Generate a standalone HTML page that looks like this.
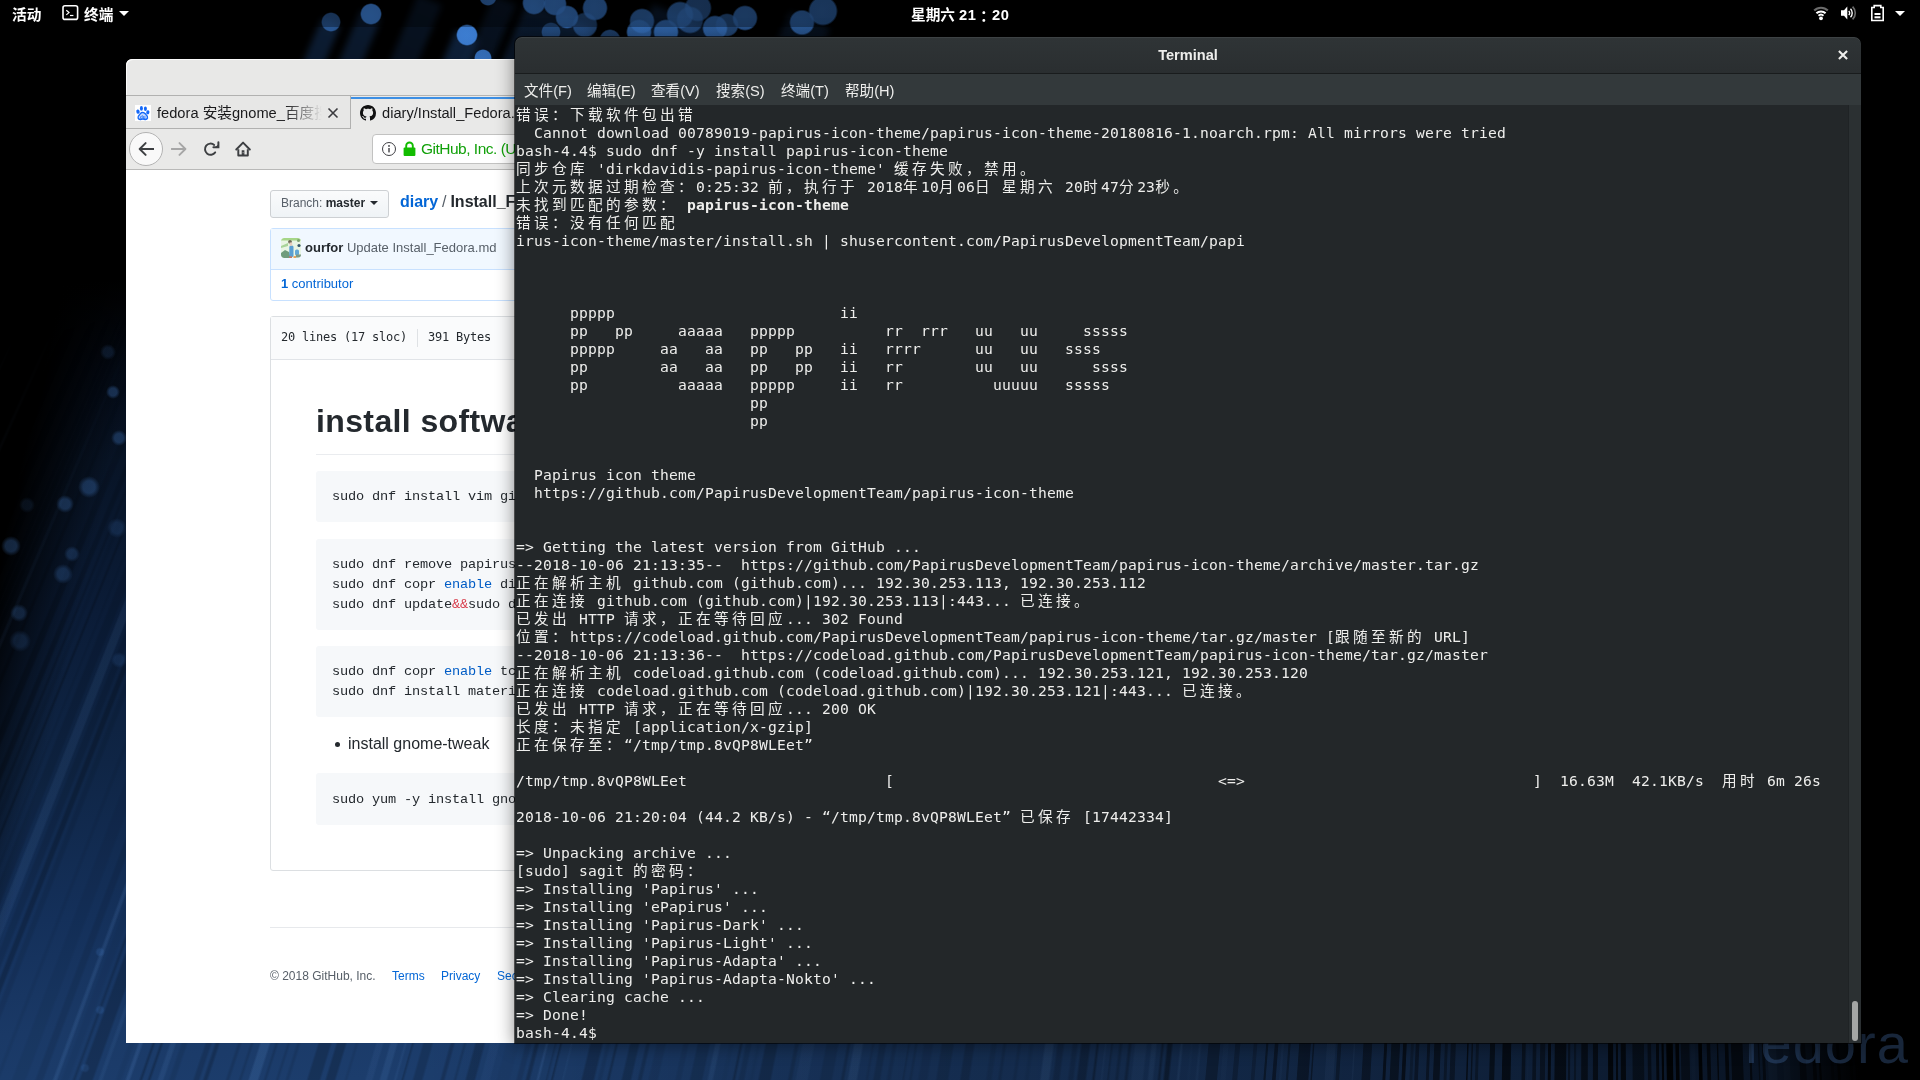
<!DOCTYPE html>
<html lang="zh-CN">
<head>
<meta charset="utf-8">
<title>Desktop</title>
<style>
*{box-sizing:border-box;margin:0;padding:0}
html,body{width:1920px;height:1080px;overflow:hidden;background:#000}
body{position:relative;font-family:"Liberation Sans","Noto Sans CJK SC",sans-serif}
.abs{position:absolute}
/* wallpaper */
#wall{position:absolute;left:0;top:0;width:1920px;height:1080px;overflow:hidden;background:#000}
#wall .fade{position:absolute;left:0;top:0;width:1920px;height:1080px;background:linear-gradient(to right,rgba(0,0,0,0) 845px,#000 885px) 0 0/1920px 70px no-repeat,linear-gradient(to right,rgba(0,0,0,0) 0,rgba(0,0,0,0) 420px,rgba(0,0,0,.22) 800px,rgba(0,0,0,.36) 1200px,rgba(0,0,0,.5) 1550px,rgba(0,0,0,.68) 1760px,#000 1862px)}
#wall .blue{position:absolute;left:0;top:0;width:1920px;height:1080px;
 background:linear-gradient(103deg,#000 0,#000 125px,rgba(0,0,0,0) 215px),
 linear-gradient(174deg,#000 0,#000 290px,#040b17 380px,#081426 470px,#0b1c37 620px,#0f2545 770px,#14305a 920px,#1a3966 1030px,#1c3d6c 1110px,#1d3e6f 100%)}
.bk{position:absolute;border-radius:50%}
#fedoralogo{position:absolute;left:1744px;top:1011px;font:italic 56px "Liberation Sans",sans-serif;color:rgba(66,104,160,.36);letter-spacing:1px;font-style:normal}
/* top bar */
#panel{position:absolute;left:0;top:0;width:1920px;height:27px;background:rgba(0,0,0,.32)}
#topbar{will-change:transform;position:absolute;left:0;top:0;width:1920px;height:27px;color:#fff;font:bold 14.67px "Liberation Sans","Noto Sans CJK SC",sans-serif}
#topbar span{position:absolute;top:2px;line-height:27px;white-space:nowrap}
/* firefox */
#ff{will-change:transform;position:absolute;left:126px;top:59px;width:1000px;height:984px;background:#fff;border-radius:6px 6px 0 0;overflow:hidden}
#ff .title{position:absolute;left:0;top:0;width:100%;height:37px;background:#e8e8e7;border-radius:6px 6px 0 0;box-shadow:inset 1px 1px 0 #fbfbfb}
#ff .tabs{position:absolute;left:0;top:36px;width:100%;height:34px;background:#e8e8e7;border-top:1px solid #b4b4b3;border-bottom:1px solid #a9a9a8}
#ff .nav{position:absolute;left:0;top:70px;width:100%;height:41px;background:#e9e9e8;border-bottom:1px solid #b9b9b8}
.pg{position:absolute;left:-126px;top:-59px;width:1920px;height:1080px}
.tabt{font:14.67px/24px "Liberation Sans","Noto Sans CJK SC",sans-serif;color:#1a1a1c;white-space:nowrap;overflow:hidden}
.cb{left:316px;width:700px;background:#f6f8fa;border-radius:3px}
.cd{left:332px;letter-spacing:-.16px;font:13.6px/20px "Liberation Mono",monospace;color:#24292e;white-space:pre}
.cd .k{color:#005cc5}.cd .o{color:#d73a49}
/* terminal */
#term{position:absolute;left:515px;top:37px;width:1346px;height:1006px;background:#232729;border-radius:7px 7px 0 0;box-shadow:0 0 0 1px rgba(0,0,0,.6),0 2px 18px 1px rgba(0,0,0,.45);overflow:hidden}
#term .hb{position:absolute;left:0;top:0;width:100%;height:37px;background:linear-gradient(#2f3436,#2a2e30);border-bottom:1px solid #191c1d;border-radius:7px 7px 0 0;box-shadow:inset 0 1px rgba(255,255,255,.07)}
#term .hb .t{position:absolute;left:0;width:100%;top:0;text-align:center;color:#eeeeec;font:bold 14.6px/37px "Liberation Sans",sans-serif}
#term .menu{position:absolute;left:0;top:37px;width:100%;height:31px;background:#33393b;color:#eeeeec;font:14.6px/31px "Liberation Sans","Noto Sans CJK SC",sans-serif}
#term .menu span{position:absolute;top:1.5px;white-space:nowrap}
#term .sb{position:absolute;right:0;top:68px;width:13px;height:938px;background:#2b3032;border-left:1px solid #1f2325}
#term .sb i{position:absolute;left:3px;top:896px;width:6px;height:40px;border-radius:3px;background:#a4a6a5}
#scr{position:absolute;left:1px;top:69px;width:1332px;height:938px;color:#eeeeec;font:14.67px/18px "DejaVu Sans Mono","Noto Sans CJK SC",monospace;letter-spacing:0.176px;overflow:hidden;will-change:transform}
#scr div{height:18px;white-space:pre}
#scr i{line-height:0;font-style:normal;font-family:"Noto Sans CJK SC",sans-serif;letter-spacing:3.345px}
#scr b{font-weight:bold}
</style>
</head>
<body>
<div id="wall"><div class="blue"></div>
<div class="abs" style="left:0;top:0;width:1920px;height:1080px;-webkit-mask-image:linear-gradient(165deg,rgba(0,0,0,0) 330px,#000 640px);mask-image:linear-gradient(165deg,rgba(0,0,0,0) 330px,#000 640px);background:conic-gradient(from 170deg at 1600px -3100px,rgba(0,0,0,0) 0.000deg,rgba(110,165,235,0.08) 0.012deg,rgba(110,165,235,0.08) 0.090deg,rgba(0,0,0,0) 0.102deg,rgba(0,0,0,0) 0.114deg,rgba(110,165,235,0.05) 0.126deg,rgba(110,165,235,0.05) 0.144deg,rgba(0,0,0,0) 0.156deg,rgba(0,0,0,0) 0.234deg,rgba(110,165,235,0.06) 0.246deg,rgba(110,165,235,0.06) 0.254deg,rgba(0,0,0,0) 0.266deg,rgba(0,0,0,0) 0.278deg,rgba(0,0,0,0.60) 0.290deg,rgba(0,0,0,0.60) 0.398deg,rgba(0,0,0,0) 0.410deg,rgba(0,0,0,0) 0.422deg,rgba(110,165,235,0.11) 0.434deg,rgba(110,165,235,0.11) 0.452deg,rgba(0,0,0,0) 0.464deg,rgba(0,0,0,0) 0.542deg,rgba(0,0,0,0.80) 0.554deg,rgba(0,0,0,0.80) 0.562deg,rgba(0,0,0,0) 0.574deg,rgba(0,0,0,0) 0.586deg,rgba(0,0,0,0.40) 0.598deg,rgba(0,0,0,0.40) 0.626deg,rgba(0,0,0,0) 0.638deg,rgba(0,0,0,0) 0.674deg,rgba(0,0,0,0.51) 0.686deg,rgba(0,0,0,0.51) 0.714deg,rgba(0,0,0,0) 0.726deg,rgba(0,0,0,0) 0.738deg,rgba(0,0,0,0.65) 0.750deg,rgba(0,0,0,0.65) 0.768deg,rgba(0,0,0,0) 0.780deg,rgba(0,0,0,0) 0.858deg,rgba(0,0,0,0.79) 0.870deg,rgba(0,0,0,0.79) 0.978deg,rgba(0,0,0,0) 0.990deg,rgba(0,0,0,0) 1.026deg,rgba(0,0,0,0.68) 1.038deg,rgba(0,0,0,0.68) 1.096deg,rgba(0,0,0,0) 1.108deg,rgba(0,0,0,0) 1.120deg,rgba(0,0,0,0.79) 1.132deg,rgba(0,0,0,0.79) 1.190deg,rgba(0,0,0,0) 1.202deg,rgba(0,0,0,0) 1.238deg,rgba(0,0,0,0.71) 1.250deg,rgba(0,0,0,0.71) 1.268deg,rgba(0,0,0,0) 1.280deg,rgba(0,0,0,0) 1.304deg,rgba(0,0,0,0.54) 1.316deg,rgba(0,0,0,0.54) 1.464deg,rgba(0,0,0,0) 1.476deg,rgba(0,0,0,0) 1.554deg,rgba(0,0,0,0.60) 1.566deg,rgba(0,0,0,0.60) 1.644deg,rgba(0,0,0,0) 1.656deg,rgba(0,0,0,0) 1.710deg,rgba(110,165,235,0.14) 1.722deg,rgba(110,165,235,0.14) 1.740deg,rgba(0,0,0,0) 1.752deg,rgba(0,0,0,0) 1.806deg,rgba(0,0,0,0.72) 1.818deg,rgba(0,0,0,0.72) 1.836deg,rgba(0,0,0,0) 1.848deg,rgba(0,0,0,0) 1.968deg,rgba(0,0,0,0.67) 1.980deg,rgba(0,0,0,0.67) 2.128deg,rgba(0,0,0,0) 2.140deg,rgba(0,0,0,0) 2.152deg,rgba(0,0,0,0.64) 2.164deg,rgba(0,0,0,0.64) 2.312deg,rgba(0,0,0,0) 2.324deg,rgba(0,0,0,0) 2.348deg,rgba(0,0,0,0.53) 2.360deg,rgba(0,0,0,0.53) 2.418deg,rgba(0,0,0,0) 2.430deg,rgba(0,0,0,0) 2.484deg,rgba(0,0,0,0.52) 2.496deg,rgba(0,0,0,0.52) 2.514deg,rgba(0,0,0,0) 2.526deg,rgba(0,0,0,0) 2.550deg,rgba(110,165,235,0.07) 2.562deg,rgba(110,165,235,0.07) 2.670deg,rgba(0,0,0,0) 2.682deg,rgba(0,0,0,0) 2.736deg,rgba(0,0,0,0.49) 2.748deg,rgba(0,0,0,0.49) 2.826deg,rgba(0,0,0,0) 2.838deg,rgba(0,0,0,0) 2.850deg,rgba(0,0,0,0.46) 2.862deg,rgba(0,0,0,0.46) 2.890deg,rgba(0,0,0,0) 2.902deg,rgba(0,0,0,0) 2.980deg,rgba(0,0,0,0.50) 2.992deg,rgba(0,0,0,0.50) 3.020deg,rgba(0,0,0,0) 3.032deg,rgba(0,0,0,0) 3.068deg,rgba(110,165,235,0.12) 3.080deg,rgba(110,165,235,0.12) 3.158deg,rgba(0,0,0,0) 3.170deg,rgba(0,0,0,0) 3.248deg,rgba(0,0,0,0.88) 3.260deg,rgba(0,0,0,0.88) 3.268deg,rgba(0,0,0,0) 3.280deg,rgba(0,0,0,0) 3.400deg,rgba(0,0,0,0.60) 3.412deg,rgba(0,0,0,0.60) 3.520deg,rgba(0,0,0,0) 3.532deg,rgba(0,0,0,0) 3.586deg,rgba(0,0,0,0.69) 3.598deg,rgba(0,0,0,0.69) 3.606deg,rgba(0,0,0,0) 3.618deg,rgba(0,0,0,0) 3.630deg,rgba(0,0,0,0.58) 3.642deg,rgba(0,0,0,0.58) 3.720deg,rgba(0,0,0,0) 3.732deg,rgba(0,0,0,0) 3.810deg,rgba(110,165,235,0.11) 3.822deg,rgba(110,165,235,0.11) 3.840deg,rgba(0,0,0,0) 3.852deg,rgba(0,0,0,0) 3.864deg,rgba(0,0,0,0.46) 3.876deg,rgba(0,0,0,0.46) 3.914deg,rgba(0,0,0,0) 3.926deg,rgba(0,0,0,0) 3.962deg,rgba(0,0,0,0.55) 3.974deg,rgba(0,0,0,0.55) 4.052deg,rgba(0,0,0,0) 4.064deg,rgba(0,0,0,0) 4.118deg,rgba(0,0,0,0.39) 4.130deg,rgba(0,0,0,0.39) 4.278deg,rgba(0,0,0,0) 4.290deg,rgba(0,0,0,0) 4.326deg,rgba(0,0,0,0.67) 4.338deg,rgba(0,0,0,0.67) 4.396deg,rgba(0,0,0,0) 4.408deg,rgba(0,0,0,0) 4.432deg,rgba(0,0,0,0.44) 4.444deg,rgba(0,0,0,0.44) 4.522deg,rgba(0,0,0,0) 4.534deg,rgba(0,0,0,0) 4.612deg,rgba(110,165,235,0.13) 4.624deg,rgba(110,165,235,0.13) 4.682deg,rgba(0,0,0,0) 4.694deg,rgba(0,0,0,0) 4.814deg,rgba(0,0,0,0.64) 4.826deg,rgba(0,0,0,0.64) 4.884deg,rgba(0,0,0,0) 4.896deg,rgba(0,0,0,0) 4.920deg,rgba(0,0,0,0.76) 4.932deg,rgba(0,0,0,0.76) 5.010deg,rgba(0,0,0,0) 5.022deg,rgba(0,0,0,0) 5.046deg,rgba(110,165,235,0.12) 5.058deg,rgba(110,165,235,0.12) 5.096deg,rgba(0,0,0,0) 5.108deg,rgba(0,0,0,0) 5.132deg,rgba(0,0,0,0.41) 5.144deg,rgba(0,0,0,0.41) 5.182deg,rgba(0,0,0,0) 5.194deg,rgba(0,0,0,0) 5.206deg,rgba(0,0,0,0.61) 5.218deg,rgba(0,0,0,0.61) 5.276deg,rgba(0,0,0,0) 5.288deg,rgba(0,0,0,0) 5.324deg,rgba(110,165,235,0.12) 5.336deg,rgba(110,165,235,0.12) 5.484deg,rgba(0,0,0,0) 5.496deg,rgba(0,0,0,0) 5.532deg,rgba(0,0,0,0.54) 5.544deg,rgba(0,0,0,0.54) 5.622deg,rgba(0,0,0,0) 5.634deg,rgba(0,0,0,0) 5.670deg,rgba(0,0,0,0.76) 5.682deg,rgba(0,0,0,0.76) 5.720deg,rgba(0,0,0,0) 5.732deg,rgba(0,0,0,0) 5.744deg,rgba(110,165,235,0.08) 5.756deg,rgba(110,165,235,0.08) 5.904deg,rgba(0,0,0,0) 5.916deg,rgba(0,0,0,0) 6.036deg,rgba(110,165,235,0.05) 6.048deg,rgba(110,165,235,0.05) 6.066deg,rgba(0,0,0,0) 6.078deg,rgba(0,0,0,0) 6.132deg,rgba(0,0,0,0.68) 6.144deg,rgba(0,0,0,0.68) 6.182deg,rgba(0,0,0,0) 6.194deg,rgba(0,0,0,0) 6.230deg,rgba(110,165,235,0.15) 6.242deg,rgba(110,165,235,0.15) 6.260deg,rgba(0,0,0,0) 6.272deg,rgba(0,0,0,0) 6.326deg,rgba(0,0,0,0.80) 6.338deg,rgba(0,0,0,0.80) 6.486deg,rgba(0,0,0,0) 6.498deg,rgba(0,0,0,0) 6.522deg,rgba(0,0,0,0.63) 6.534deg,rgba(0,0,0,0.63) 6.562deg,rgba(0,0,0,0) 6.574deg,rgba(0,0,0,0) 6.694deg,rgba(0,0,0,0.63) 6.706deg,rgba(0,0,0,0.63) 6.734deg,rgba(0,0,0,0) 6.746deg,rgba(0,0,0,0) 6.782deg,rgba(0,0,0,0.36) 6.794deg,rgba(0,0,0,0.36) 6.822deg,rgba(0,0,0,0) 6.834deg,rgba(0,0,0,0) 6.954deg,rgba(0,0,0,0.68) 6.966deg,rgba(0,0,0,0.68) 6.984deg,rgba(0,0,0,0) 6.996deg,rgba(0,0,0,0) 7.020deg,rgba(0,0,0,0.57) 7.032deg,rgba(0,0,0,0.57) 7.070deg,rgba(0,0,0,0) 7.082deg,rgba(0,0,0,0) 7.160deg,rgba(0,0,0,0.46) 7.172deg,rgba(0,0,0,0.46) 7.250deg,rgba(0,0,0,0) 7.262deg,rgba(0,0,0,0) 7.382deg,rgba(110,165,235,0.11) 7.394deg,rgba(110,165,235,0.11) 7.472deg,rgba(0,0,0,0) 7.484deg,rgba(0,0,0,0) 7.562deg,rgba(110,165,235,0.14) 7.574deg,rgba(110,165,235,0.14) 7.682deg,rgba(0,0,0,0) 7.694deg,rgba(0,0,0,0) 7.718deg,rgba(0,0,0,0.51) 7.730deg,rgba(0,0,0,0.51) 7.758deg,rgba(0,0,0,0) 7.770deg,rgba(0,0,0,0) 7.794deg,rgba(0,0,0,0.42) 7.806deg,rgba(0,0,0,0.42) 7.814deg,rgba(0,0,0,0) 7.826deg,rgba(0,0,0,0) 7.904deg,rgba(0,0,0,0.60) 7.916deg,rgba(0,0,0,0.60) 7.934deg,rgba(0,0,0,0) 7.946deg,rgba(0,0,0,0) 8.024deg,rgba(0,0,0,0.57) 8.036deg,rgba(0,0,0,0.57) 8.184deg,rgba(0,0,0,0) 8.196deg,rgba(0,0,0,0) 8.220deg,rgba(0,0,0,0.68) 8.232deg,rgba(0,0,0,0.68) 8.270deg,rgba(0,0,0,0) 8.282deg,rgba(0,0,0,0) 8.360deg,rgba(0,0,0,0.68) 8.372deg,rgba(0,0,0,0.68) 8.380deg,rgba(0,0,0,0) 8.392deg,rgba(0,0,0,0) 8.470deg,rgba(0,0,0,0.63) 8.482deg,rgba(0,0,0,0.63) 8.520deg,rgba(0,0,0,0) 8.532deg,rgba(0,0,0,0) 8.586deg,rgba(0,0,0,0.87) 8.598deg,rgba(0,0,0,0.87) 8.636deg,rgba(0,0,0,0) 8.648deg,rgba(0,0,0,0) 8.684deg,rgba(110,165,235,0.06) 8.696deg,rgba(110,165,235,0.06) 8.734deg,rgba(0,0,0,0) 8.746deg,rgba(0,0,0,0) 8.758deg,rgba(0,0,0,0.44) 8.770deg,rgba(0,0,0,0.44) 8.878deg,rgba(0,0,0,0) 8.890deg,rgba(0,0,0,0) 8.902deg,rgba(0,0,0,0.84) 8.914deg,rgba(0,0,0,0.84) 8.952deg,rgba(0,0,0,0) 8.964deg,rgba(0,0,0,0) 8.988deg,rgba(0,0,0,0.88) 9.000deg,rgba(0,0,0,0.88) 9.078deg,rgba(0,0,0,0) 9.090deg,rgba(0,0,0,0) 9.114deg,rgba(0,0,0,0.81) 9.126deg,rgba(0,0,0,0.81) 9.144deg,rgba(0,0,0,0) 9.156deg,rgba(0,0,0,0) 9.180deg,rgba(0,0,0,0.67) 9.192deg,rgba(0,0,0,0.67) 9.220deg,rgba(0,0,0,0) 9.232deg,rgba(0,0,0,0) 9.287deg,rgba(0,0,0,0.48) 9.299deg,rgba(0,0,0,0.48) 9.337deg,rgba(0,0,0,0) 9.349deg,rgba(0,0,0,0) 9.386deg,rgba(0,0,0,0.45) 9.398deg,rgba(0,0,0,0.45) 9.546deg,rgba(0,0,0,0) 9.558deg,rgba(0,0,0,0) 9.638deg,rgba(0,0,0,0.69) 9.650deg,rgba(0,0,0,0.69) 9.708deg,rgba(0,0,0,0) 9.720deg,rgba(0,0,0,0) 9.745deg,rgba(0,0,0,0.69) 9.757deg,rgba(0,0,0,0.69) 9.775deg,rgba(0,0,0,0) 9.787deg,rgba(0,0,0,0) 9.812deg,rgba(0,0,0,0.77) 9.824deg,rgba(0,0,0,0.77) 9.882deg,rgba(0,0,0,0) 9.894deg,rgba(0,0,0,0) 10.022deg,rgba(0,0,0,0.58) 10.034deg,rgba(0,0,0,0.58) 10.092deg,rgba(0,0,0,0) 10.104deg,rgba(0,0,0,0) 10.162deg,rgba(0,0,0,0.54) 10.174deg,rgba(0,0,0,0.54) 10.252deg,rgba(0,0,0,0) 10.264deg,rgba(0,0,0,0) 10.322deg,rgba(0,0,0,0.32) 10.334deg,rgba(0,0,0,0.32) 10.352deg,rgba(0,0,0,0) 10.364deg,rgba(0,0,0,0) 10.404deg,rgba(0,0,0,0.41) 10.416deg,rgba(0,0,0,0.41) 10.434deg,rgba(0,0,0,0) 10.446deg,rgba(0,0,0,0) 10.459deg,rgba(0,0,0,0.61) 10.471deg,rgba(0,0,0,0.61) 10.619deg,rgba(0,0,0,0) 10.631deg,rgba(0,0,0,0) 10.671deg,rgba(0,0,0,0.71) 10.683deg,rgba(0,0,0,0.71) 10.711deg,rgba(0,0,0,0) 10.723deg,rgba(0,0,0,0) 10.750deg,rgba(0,0,0,0.41) 10.762deg,rgba(0,0,0,0.41) 10.820deg,rgba(0,0,0,0) 10.832deg,rgba(0,0,0,0) 10.873deg,rgba(0,0,0,0.42) 10.885deg,rgba(0,0,0,0.42) 10.923deg,rgba(0,0,0,0) 10.935deg,rgba(0,0,0,0) 10.976deg,rgba(110,165,235,0.04) 10.988deg,rgba(110,165,235,0.04) 10.996deg,rgba(0,0,0,0) 11.008deg,rgba(0,0,0,0) 11.021deg,rgba(0,0,0,0.45) 11.033deg,rgba(0,0,0,0.45) 11.071deg,rgba(0,0,0,0) 11.083deg,rgba(0,0,0,0) 11.221deg,rgba(0,0,0,0.63) 11.233deg,rgba(0,0,0,0.63) 11.341deg,rgba(0,0,0,0) 11.353deg,rgba(0,0,0,0) 11.444deg,rgba(0,0,0,0.54) 11.456deg,rgba(0,0,0,0.54) 11.514deg,rgba(0,0,0,0) 11.526deg,rgba(0,0,0,0) 11.668deg,rgba(0,0,0,0.32) 11.680deg,rgba(0,0,0,0.32) 11.708deg,rgba(0,0,0,0) 11.720deg,rgba(0,0,0,0) 11.749deg,rgba(0,0,0,0.45) 11.761deg,rgba(0,0,0,0.45) 11.769deg,rgba(0,0,0,0) 11.781deg,rgba(0,0,0,0) 11.810deg,rgba(0,0,0,0.64) 11.822deg,rgba(0,0,0,0.64) 11.830deg,rgba(0,0,0,0) 11.842deg,rgba(0,0,0,0) 11.987deg,rgba(0,0,0,0.37) 11.999deg,rgba(0,0,0,0.37) 12.057deg,rgba(0,0,0,0) 12.069deg,rgba(0,0,0,0) 12.098deg,rgba(0,0,0,0.32) 12.110deg,rgba(0,0,0,0.32) 12.138deg,rgba(0,0,0,0) 12.150deg,rgba(0,0,0,0) 12.194deg,rgba(0,0,0,0.49) 12.206deg,rgba(0,0,0,0.49) 12.284deg,rgba(0,0,0,0) 12.296deg,rgba(0,0,0,0) 12.341deg,rgba(0,0,0,0.41) 12.353deg,rgba(0,0,0,0.41) 12.381deg,rgba(0,0,0,0) 12.393deg,rgba(0,0,0,0) 12.490deg,rgba(0,0,0,0.38) 12.502deg,rgba(0,0,0,0.38) 12.540deg,rgba(0,0,0,0) 12.552deg,rgba(0,0,0,0) 12.567deg,rgba(0,0,0,0.22) 12.579deg,rgba(0,0,0,0.22) 12.607deg,rgba(0,0,0,0) 12.619deg,rgba(0,0,0,0) 12.665deg,rgba(0,0,0,0.59) 12.677deg,rgba(0,0,0,0.59) 12.715deg,rgba(0,0,0,0) 12.727deg,rgba(0,0,0,0) 12.757deg,rgba(0,0,0,0.46) 12.769deg,rgba(0,0,0,0.46) 12.877deg,rgba(0,0,0,0) 12.889deg,rgba(0,0,0,0) 12.935deg,rgba(0,0,0,0.56) 12.947deg,rgba(0,0,0,0.56) 12.975deg,rgba(0,0,0,0) 12.987deg,rgba(0,0,0,0) 13.142deg,rgba(0,0,0,0.38) 13.154deg,rgba(0,0,0,0.38) 13.262deg,rgba(0,0,0,0) 13.274deg,rgba(0,0,0,0) 13.376deg,rgba(110,165,235,0.10) 13.388deg,rgba(110,165,235,0.10) 13.396deg,rgba(0,0,0,0) 13.408deg,rgba(0,0,0,0) 13.567deg,rgba(0,0,0,0.31) 13.579deg,rgba(0,0,0,0.31) 13.617deg,rgba(0,0,0,0) 13.629deg,rgba(0,0,0,0) 13.645deg,rgba(110,165,235,0.10) 13.657deg,rgba(110,165,235,0.10) 13.765deg,rgba(0,0,0,0) 13.777deg,rgba(0,0,0,0) 13.938deg,rgba(0,0,0,0.38) 13.950deg,rgba(0,0,0,0.38) 13.958deg,rgba(0,0,0,0) 13.970deg,rgba(0,0,0,0) 13.987deg,rgba(0,0,0,0.40) 13.999deg,rgba(0,0,0,0.40) 14.147deg,rgba(0,0,0,0) 14.159deg,rgba(0,0,0,0) 14.265deg,rgba(0,0,0,0.29) 14.277deg,rgba(0,0,0,0.29) 14.295deg,rgba(0,0,0,0) 14.307deg,rgba(0,0,0,0) 14.357deg,rgba(110,165,235,0.07) 14.369deg,rgba(110,165,235,0.07) 14.387deg,rgba(0,0,0,0) 14.399deg,rgba(0,0,0,0) 14.433deg,rgba(0,0,0,0.41) 14.445deg,rgba(0,0,0,0.41) 14.483deg,rgba(0,0,0,0) 14.495deg,rgba(0,0,0,0) 14.571deg,rgba(0,0,0,0.39) 14.583deg,rgba(0,0,0,0.39) 14.601deg,rgba(0,0,0,0) 14.613deg,rgba(0,0,0,0) 14.723deg,rgba(0,0,0,0.20) 14.735deg,rgba(0,0,0,0.20) 14.773deg,rgba(0,0,0,0) 14.785deg,rgba(0,0,0,0) 14.956deg,rgba(0,0,0,0.22) 14.968deg,rgba(0,0,0,0.22) 15.026deg,rgba(0,0,0,0) 15.038deg,rgba(0,0,0,0) 15.116deg,rgba(110,165,235,0.05) 15.128deg,rgba(110,165,235,0.05) 15.186deg,rgba(0,0,0,0) 15.198deg,rgba(0,0,0,0) 15.232deg,rgba(0,0,0,0.28) 15.244deg,rgba(0,0,0,0.28) 15.392deg,rgba(0,0,0,0) 15.404deg,rgba(0,0,0,0) 15.483deg,rgba(110,165,235,0.10) 15.513deg,rgba(110,165,235,0.10) 15.513deg,rgba(0,0,0,0) 15.543deg,rgba(0,0,0,0) 15.597deg,rgba(110,165,235,0.04) 15.627deg,rgba(110,165,235,0.04) 15.627deg,rgba(0,0,0,0) 15.657deg,rgba(0,0,0,0) 15.737deg,rgba(110,165,235,0.15) 15.767deg,rgba(110,165,235,0.15) 15.767deg,rgba(0,0,0,0) 15.797deg,rgba(0,0,0,0) 15.878deg,rgba(0,0,0,0.36) 15.908deg,rgba(0,0,0,0.36) 15.948deg,rgba(0,0,0,0) 15.978deg,rgba(0,0,0,0) 15.996deg,rgba(0,0,0,0.28) 16.026deg,rgba(0,0,0,0.28) 16.026deg,rgba(0,0,0,0) 16.056deg,rgba(0,0,0,0) 16.093deg,rgba(110,165,235,0.12) 16.123deg,rgba(110,165,235,0.12) 16.163deg,rgba(0,0,0,0) 16.193deg,rgba(0,0,0,0) 16.229deg,rgba(110,165,235,0.09) 16.259deg,rgba(110,165,235,0.09) 16.389deg,rgba(0,0,0,0) 16.419deg,rgba(0,0,0,0) 16.438deg,rgba(0,0,0,0.21) 16.468deg,rgba(0,0,0,0.21) 16.478deg,rgba(0,0,0,0) 16.508deg,rgba(0,0,0,0) 16.563deg,rgba(0,0,0,0.16) 16.593deg,rgba(0,0,0,0.16) 16.603deg,rgba(0,0,0,0) 16.633deg,rgba(0,0,0,0) 16.690deg,rgba(0,0,0,0.16) 16.720deg,rgba(0,0,0,0.16) 16.710deg,rgba(0,0,0,0) 16.740deg,rgba(0,0,0,0) 16.777deg,rgba(110,165,235,0.07) 16.807deg,rgba(110,165,235,0.07) 16.797deg,rgba(0,0,0,0) 16.827deg,rgba(0,0,0,0) 16.884deg,rgba(0,0,0,0.29) 16.914deg,rgba(0,0,0,0.29) 16.914deg,rgba(0,0,0,0) 16.944deg,rgba(0,0,0,0) 17.001deg,rgba(0,0,0,0.24) 17.031deg,rgba(0,0,0,0.24) 17.121deg,rgba(0,0,0,0) 17.151deg,rgba(0,0,0,0) 17.170deg,rgba(0,0,0,0.12) 17.200deg,rgba(0,0,0,0.12) 17.240deg,rgba(0,0,0,0) 17.270deg,rgba(0,0,0,0) 17.357deg,rgba(0,0,0,0.15) 17.387deg,rgba(0,0,0,0.15) 17.447deg,rgba(0,0,0,0) 17.477deg,rgba(0,0,0,0) 17.496deg,rgba(110,165,235,0.14) 17.526deg,rgba(110,165,235,0.14) 17.616deg,rgba(0,0,0,0) 17.646deg,rgba(0,0,0,0) 17.773deg,rgba(0,0,0,0.05) 17.803deg,rgba(0,0,0,0.05) 17.823deg,rgba(0,0,0,0) 17.853deg,rgba(0,0,0,0) 17.942deg,rgba(0,0,0,0.09) 17.972deg,rgba(0,0,0,0.09) 17.982deg,rgba(0,0,0,0) 18.012deg,rgba(0,0,0,0) 18.142deg,rgba(0,0,0,0.11) 18.172deg,rgba(0,0,0,0.11) 18.182deg,rgba(0,0,0,0) 18.212deg,rgba(0,0,0,0) 18.272deg,rgba(0,0,0,0.08) 18.302deg,rgba(0,0,0,0.08) 18.342deg,rgba(0,0,0,0) 18.372deg,rgba(0,0,0,0) 18.572deg,rgba(0,0,0,0.15) 18.602deg,rgba(0,0,0,0.15) 18.692deg,rgba(0,0,0,0) 18.722deg,rgba(0,0,0,0) 18.852deg,rgba(0,0,0,0.12) 18.882deg,rgba(0,0,0,0.12) 19.012deg,rgba(0,0,0,0) 19.042deg,rgba(0,0,0,0) 19.132deg,rgba(0,0,0,0.07) 19.162deg,rgba(0,0,0,0.07) 19.252deg,rgba(0,0,0,0) 19.282deg,rgba(0,0,0,0) 19.342deg,rgba(0,0,0,0.10) 19.372deg,rgba(0,0,0,0.10) 19.372deg,rgba(0,0,0,0) 19.402deg,rgba(0,0,0,0) 19.442deg,rgba(0,0,0,0.11) 19.472deg,rgba(0,0,0,0.11) 19.462deg,rgba(0,0,0,0) 19.492deg,rgba(0,0,0,0) 19.622deg,rgba(0,0,0,0.09) 19.652deg,rgba(0,0,0,0.09) 19.672deg,rgba(0,0,0,0) 19.702deg,rgba(0,0,0,0) 19.762deg,rgba(0,0,0,0.13) 19.792deg,rgba(0,0,0,0.13) 19.852deg,rgba(0,0,0,0) 19.882deg,rgba(0,0,0,0) 19.922deg,rgba(0,0,0,0.08) 19.952deg,rgba(0,0,0,0.08) 19.952deg,rgba(0,0,0,0) 19.982deg,rgba(0,0,0,0) 20.072deg,rgba(110,165,235,0.13) 20.102deg,rgba(110,165,235,0.13) 20.192deg,rgba(0,0,0,0) 20.222deg,rgba(0,0,0,0) 20.242deg,rgba(0,0,0,0.16) 20.272deg,rgba(0,0,0,0.16) 20.282deg,rgba(0,0,0,0) 20.312deg,rgba(0,0,0,0) 20.402deg,rgba(0,0,0,0.10) 20.432deg,rgba(0,0,0,0.10) 20.562deg,rgba(0,0,0,0) 20.592deg,rgba(0,0,0,0) 20.722deg,rgba(110,165,235,0.07) 20.752deg,rgba(110,165,235,0.07) 20.882deg,rgba(0,0,0,0) 20.912deg,rgba(0,0,0,0) 20.932deg,rgba(0,0,0,0.13) 20.962deg,rgba(0,0,0,0.13) 20.982deg,rgba(0,0,0,0) 21.012deg,rgba(0,0,0,0) 21.212deg,rgba(0,0,0,0.18) 21.242deg,rgba(0,0,0,0.18) 21.372deg,rgba(0,0,0,0) 21.402deg,rgba(0,0,0,0) 21.442deg,rgba(0,0,0,0.04) 21.472deg,rgba(0,0,0,0.04) 21.492deg,rgba(0,0,0,0) 21.522deg,rgba(0,0,0,0) 21.562deg,rgba(0,0,0,0.11) 21.592deg,rgba(0,0,0,0.11) 21.632deg,rgba(0,0,0,0) 21.662deg,rgba(0,0,0,0) 21.682deg,rgba(0,0,0,0.21) 21.712deg,rgba(0,0,0,0.21) 21.712deg,rgba(0,0,0,0) 21.742deg,rgba(0,0,0,0) 21.802deg,rgba(0,0,0,0.03) 21.832deg,rgba(0,0,0,0.03) 21.852deg,rgba(0,0,0,0) 21.882deg,rgba(0,0,0,0) 21.972deg,rgba(110,165,235,0.11) 22.002deg,rgba(110,165,235,0.11) 22.042deg,rgba(0,0,0,0) 22.072deg,rgba(0,0,0,0) 22.112deg,rgba(0,0,0,0.13) 22.142deg,rgba(0,0,0,0.13) 22.272deg,rgba(0,0,0,0) 22.302deg,rgba(0,0,0,0) 22.392deg,rgba(0,0,0,0.07) 22.422deg,rgba(0,0,0,0.07) 22.462deg,rgba(0,0,0,0) 22.492deg,rgba(0,0,0,0) 22.692deg,rgba(0,0,0,0.07) 22.722deg,rgba(0,0,0,0.07) 22.812deg,rgba(0,0,0,0) 22.842deg,rgba(0,0,0,0) 22.902deg,rgba(0,0,0,0.16) 22.932deg,rgba(0,0,0,0.16) 22.952deg,rgba(0,0,0,0) 22.982deg,rgba(0,0,0,0) 23.042deg,rgba(0,0,0,0.18) 23.072deg,rgba(0,0,0,0.18) 23.162deg,rgba(0,0,0,0) 23.192deg,rgba(0,0,0,0) 23.322deg,rgba(0,0,0,0.21) 23.352deg,rgba(0,0,0,0.21) 23.352deg,rgba(0,0,0,0) 23.382deg,rgba(0,0,0,0) 23.422deg,rgba(0,0,0,0.08) 23.452deg,rgba(0,0,0,0.08) 23.472deg,rgba(0,0,0,0) 23.502deg,rgba(0,0,0,0) 23.522deg,rgba(0,0,0,0.20) 23.552deg,rgba(0,0,0,0.20) 23.682deg,rgba(0,0,0,0) 23.712deg,rgba(0,0,0,0) 23.912deg,rgba(110,165,235,0.06) 23.942deg,rgba(110,165,235,0.06) 23.932deg,rgba(0,0,0,0) 23.962deg,rgba(0,0,0,0) 24.052deg,rgba(0,0,0,0.22) 24.082deg,rgba(0,0,0,0.22) 24.072deg,rgba(0,0,0,0) 24.102deg,rgba(0,0,0,0) 24.122deg,rgba(0,0,0,0.12) 24.152deg,rgba(0,0,0,0.12) 24.142deg,rgba(0,0,0,0) 24.172deg,rgba(0,0,0,0) 24.232deg,rgba(110,165,235,0.14) 24.262deg,rgba(110,165,235,0.14) 24.262deg,rgba(0,0,0,0) 24.292deg,rgba(0,0,0,0) 24.352deg,rgba(0,0,0,0.21) 24.382deg,rgba(0,0,0,0.21) 24.402deg,rgba(0,0,0,0) 24.432deg,rgba(0,0,0,0) 24.452deg,rgba(0,0,0,0.10) 24.482deg,rgba(0,0,0,0.10) 24.522deg,rgba(0,0,0,0) 24.552deg,rgba(0,0,0,0) 24.612deg,rgba(0,0,0,0.03) 24.642deg,rgba(0,0,0,0.03) 24.772deg,rgba(0,0,0,0) 24.802deg,rgba(0,0,0,0) 24.862deg,rgba(110,165,235,0.05) 24.892deg,rgba(110,165,235,0.05) 24.982deg,rgba(0,0,0,0) 25.012deg,rgba(0,0,0,0) 25.052deg,rgba(0,0,0,0.19) 25.082deg,rgba(0,0,0,0.19) 25.172deg,rgba(0,0,0,0) 25.202deg,rgba(0,0,0,0) 25.292deg,rgba(0,0,0,0.12) 25.322deg,rgba(0,0,0,0.12) 25.322deg,rgba(0,0,0,0) 25.352deg,rgba(0,0,0,0) 25.442deg,rgba(0,0,0,0.17) 25.472deg,rgba(0,0,0,0.17) 25.492deg,rgba(0,0,0,0) 25.522deg,rgba(0,0,0,0) 25.722deg,rgba(0,0,0,0.15) 25.752deg,rgba(0,0,0,0.15) 25.842deg,rgba(0,0,0,0) 25.872deg,rgba(0,0,0,0) 25.962deg,rgba(0,0,0,0.18) 25.992deg,rgba(0,0,0,0.18) 25.982deg,rgba(0,0,0,0) 26.012deg,rgba(0,0,0,0) 26.052deg,rgba(110,165,235,0.08) 26.082deg,rgba(110,165,235,0.08) 26.082deg,rgba(0,0,0,0) 26.112deg,rgba(0,0,0,0) 26.172deg,rgba(110,165,235,0.11) 26.202deg,rgba(110,165,235,0.11) 26.262deg,rgba(0,0,0,0) 26.292deg,rgba(0,0,0,0) 26.352deg,rgba(110,165,235,0.07) 26.382deg,rgba(110,165,235,0.07) 26.442deg,rgba(0,0,0,0) 26.472deg,rgba(0,0,0,0) 26.672deg,rgba(0,0,0,0.07) 26.702deg,rgba(0,0,0,0.07) 26.702deg,rgba(0,0,0,0) 26.732deg,rgba(0,0,0,0) 26.822deg,rgba(0,0,0,0.20) 26.852deg,rgba(0,0,0,0.20) 26.942deg,rgba(0,0,0,0) 26.972deg,rgba(0,0,0,0) 27.012deg,rgba(0,0,0,0.18) 27.042deg,rgba(0,0,0,0.18) 27.172deg,rgba(0,0,0,0) 27.202deg,rgba(0,0,0,0) 27.402deg,rgba(0,0,0,0.09) 27.432deg,rgba(0,0,0,0.09) 27.442deg,rgba(0,0,0,0) 27.472deg,rgba(0,0,0,0) 27.532deg,rgba(0,0,0,0.10) 27.562deg,rgba(0,0,0,0.10) 27.562deg,rgba(0,0,0,0) 27.592deg,rgba(0,0,0,0) 27.682deg,rgba(0,0,0,0.12) 27.712deg,rgba(0,0,0,0.12) 27.712deg,rgba(0,0,0,0) 27.742deg,rgba(0,0,0,0) 27.782deg,rgba(110,165,235,0.15) 27.812deg,rgba(110,165,235,0.15) 27.902deg,rgba(0,0,0,0) 27.932deg,rgba(0,0,0,0) 27.992deg,rgba(0,0,0,0.11) 28.022deg,rgba(0,0,0,0.11) 28.022deg,rgba(0,0,0,0) 28.052deg,rgba(0,0,0,0) 28.142deg,rgba(0,0,0,0.11) 28.172deg,rgba(0,0,0,0.11) 28.182deg,rgba(0,0,0,0) 28.212deg,rgba(0,0,0,0) 28.412deg,rgba(0,0,0,0.19) 28.442deg,rgba(0,0,0,0.19) 28.462deg,rgba(0,0,0,0) 28.492deg,rgba(0,0,0,0) 28.512deg,rgba(0,0,0,0.14) 28.542deg,rgba(0,0,0,0.14) 28.582deg,rgba(0,0,0,0) 28.612deg,rgba(0,0,0,0) 28.812deg,rgba(0,0,0,0.08) 28.842deg,rgba(0,0,0,0.08) 28.882deg,rgba(0,0,0,0) 28.912deg,rgba(0,0,0,0) 28.952deg,rgba(110,165,235,0.10) 28.982deg,rgba(110,165,235,0.10) 29.022deg,rgba(0,0,0,0) 29.052deg,rgba(0,0,0,0) 29.112deg,rgba(0,0,0,0.22) 29.142deg,rgba(0,0,0,0.22) 29.142deg,rgba(0,0,0,0) 29.172deg,rgba(0,0,0,0) 29.212deg,rgba(0,0,0,0.22) 29.242deg,rgba(0,0,0,0.22) 29.242deg,rgba(0,0,0,0) 29.272deg,rgba(0,0,0,0) 29.362deg,rgba(110,165,235,0.14) 29.392deg,rgba(110,165,235,0.14) 29.412deg,rgba(0,0,0,0) 29.442deg,rgba(0,0,0,0) 29.462deg,rgba(0,0,0,0.04) 29.492deg,rgba(0,0,0,0.04) 29.532deg,rgba(0,0,0,0) 29.562deg,rgba(0,0,0,0) 29.692deg,rgba(110,165,235,0.08) 29.722deg,rgba(110,165,235,0.08) 29.742deg,rgba(0,0,0,0) 29.772deg,rgba(0,0,0,0) 29.812deg,rgba(0,0,0,0.18) 29.842deg,rgba(0,0,0,0.18) 29.972deg,rgba(0,0,0,0) 30.002deg,rgba(0,0,0,0) 30.022deg,rgba(0,0,0,0.16) 30.052deg,rgba(0,0,0,0.16) 30.052deg,rgba(0,0,0,0) 30.082deg,rgba(0,0,0,0) 30.102deg,rgba(0,0,0,0.04) 30.132deg,rgba(0,0,0,0.04) 30.192deg,rgba(0,0,0,0) 30.222deg,rgba(0,0,0,0) 30.242deg,rgba(110,165,235,0.13) 30.272deg,rgba(110,165,235,0.13) 30.292deg,rgba(0,0,0,0) 30.322deg,rgba(0,0,0,0) 30.412deg,rgba(0,0,0,0.09) 30.442deg,rgba(0,0,0,0.09) 30.502deg,rgba(0,0,0,0) 30.532deg,rgba(0,0,0,0) 30.622deg,rgba(0,0,0,0.05) 30.652deg,rgba(0,0,0,0.05) 30.782deg,rgba(0,0,0,0) 30.812deg,rgba(0,0,0,0) 30.942deg,rgba(0,0,0,0.05) 30.972deg,rgba(0,0,0,0.05) 30.982deg,rgba(0,0,0,0) 31.012deg,rgba(0,0,0,0) 31.212deg,rgba(0,0,0,0.08) 31.242deg,rgba(0,0,0,0.08) 31.282deg,rgba(0,0,0,0) 31.312deg,rgba(0,0,0,0) 31.332deg,rgba(0,0,0,0.20) 31.362deg,rgba(0,0,0,0.20) 31.402deg,rgba(0,0,0,0) 31.432deg,rgba(0,0,0,0) 31.452deg,rgba(0,0,0,0.10) 31.482deg,rgba(0,0,0,0.10) 31.542deg,rgba(0,0,0,0) 31.572deg,rgba(0,0,0,0) 31.592deg,rgba(110,165,235,0.09) 31.622deg,rgba(110,165,235,0.09) 31.712deg,rgba(0,0,0,0) 31.742deg,rgba(0,0,0,0) 31.762deg,rgba(0,0,0,0.10) 31.792deg,rgba(0,0,0,0.10) 31.882deg,rgba(0,0,0,0) 31.912deg,rgba(0,0,0,0) 31.952deg,rgba(0,0,0,0.06) 31.982deg,rgba(0,0,0,0.06) 31.972deg,rgba(0,0,0,0) 32.002deg,rgba(0,0,0,0) 32.092deg,rgba(0,0,0,0.21) 32.122deg,rgba(0,0,0,0.21) 32.122deg,rgba(0,0,0,0) 32.152deg,rgba(0,0,0,0) 32.192deg,rgba(0,0,0,0.06) 32.222deg,rgba(0,0,0,0.06) 32.232deg,rgba(0,0,0,0) 32.262deg,rgba(0,0,0,0) 32.282deg,rgba(0,0,0,0.17) 32.312deg,rgba(0,0,0,0.17) 32.312deg,rgba(0,0,0,0) 32.342deg,rgba(0,0,0,0) 32.382deg,rgba(0,0,0,0.21) 32.412deg,rgba(0,0,0,0.21) 32.452deg,rgba(0,0,0,0) 32.482deg,rgba(0,0,0,0) 32.572deg,rgba(0,0,0,0.21) 32.602deg,rgba(0,0,0,0.21) 32.662deg,rgba(0,0,0,0) 32.692deg,rgba(0,0,0,0) 32.892deg,rgba(0,0,0,0.19) 32.922deg,rgba(0,0,0,0.19) 32.932deg,rgba(0,0,0,0) 32.962deg,rgba(0,0,0,0) 33.092deg,rgba(110,165,235,0.06) 33.122deg,rgba(110,165,235,0.06) 33.142deg,rgba(0,0,0,0) 33.172deg,rgba(0,0,0,0) 33.212deg,rgba(0,0,0,0.13) 33.242deg,rgba(0,0,0,0.13) 33.232deg,rgba(0,0,0,0) 33.262deg,rgba(0,0,0,0) 33.282deg,rgba(0,0,0,0.17) 33.312deg,rgba(0,0,0,0.17) 33.322deg,rgba(0,0,0,0) 33.352deg,rgba(0,0,0,0) 33.372deg,rgba(0,0,0,0.09) 33.402deg,rgba(0,0,0,0.09) 33.392deg,rgba(0,0,0,0) 33.422deg,rgba(0,0,0,0) 33.512deg,rgba(0,0,0,0.09) 33.542deg,rgba(0,0,0,0.09) 33.582deg,rgba(0,0,0,0) 33.612deg,rgba(0,0,0,0) 33.702deg,rgba(0,0,0,0.11) 33.732deg,rgba(0,0,0,0.11) 33.792deg,rgba(0,0,0,0) 33.822deg,rgba(0,0,0,0) 33.952deg,rgba(0,0,0,0.11) 33.982deg,rgba(0,0,0,0.11) 34.112deg,rgba(0,0,0,0) 34.142deg,rgba(0,0,0,0) 34.232deg,rgba(110,165,235,0.08) 34.262deg,rgba(110,165,235,0.08) 34.272deg,rgba(0,0,0,0) 34.302deg,rgba(0,0,0,0) 34.322deg,rgba(0,0,0,0.10) 34.352deg,rgba(0,0,0,0.10) 34.362deg,rgba(0,0,0,0) 34.392deg,rgba(0,0,0,0) 34.522deg,rgba(0,0,0,0.05) 34.552deg,rgba(0,0,0,0.05) 34.542deg,rgba(0,0,0,0) 34.572deg,rgba(0,0,0,0) 34.632deg,rgba(0,0,0,0.13) 34.662deg,rgba(0,0,0,0.13) 34.662deg,rgba(0,0,0,0) 34.692deg,rgba(0,0,0,0) 34.732deg,rgba(110,165,235,0.15) 34.762deg,rgba(110,165,235,0.15) 34.752deg,rgba(0,0,0,0) 34.782deg,rgba(0,0,0,0) 34.982deg,rgba(0,0,0,0.22) 35.012deg,rgba(0,0,0,0.22) 35.012deg,rgba(0,0,0,0) 35.042deg,rgba(0,0,0,0) 35.082deg,rgba(0,0,0,0.10) 35.112deg,rgba(0,0,0,0.10) 35.132deg,rgba(0,0,0,0) 35.162deg,rgba(0,0,0,0) 35.202deg,rgba(110,165,235,0.07) 35.232deg,rgba(110,165,235,0.07) 35.292deg,rgba(0,0,0,0) 35.322deg,rgba(0,0,0,0) 35.412deg,rgba(0,0,0,0.21) 35.442deg,rgba(0,0,0,0.21) 35.452deg,rgba(0,0,0,0) 35.482deg,rgba(0,0,0,0) 35.612deg,rgba(0,0,0,0.08) 35.642deg,rgba(0,0,0,0.08) 35.682deg,rgba(0,0,0,0) 35.712deg,rgba(0,0,0,0) 35.752deg,rgba(0,0,0,0.15) 35.782deg,rgba(0,0,0,0.15) 35.792deg,rgba(0,0,0,0) 35.822deg,rgba(0,0,0,0) 35.882deg,rgba(0,0,0,0.18) 35.912deg,rgba(0,0,0,0.18) 36.002deg,rgba(0,0,0,0) 36.032deg,rgba(0,0,0,0) 36.162deg,rgba(0,0,0,0.10) 36.192deg,rgba(0,0,0,0.10) 36.182deg,rgba(0,0,0,0) 36.212deg,rgba(0,0,0,0) 36.342deg,rgba(0,0,0,0.13) 36.372deg,rgba(0,0,0,0.13) 36.372deg,rgba(0,0,0,0) 36.402deg,rgba(0,0,0,0) 36.602deg,rgba(0,0,0,0.22) 36.632deg,rgba(0,0,0,0.22) 36.692deg,rgba(0,0,0,0) 36.722deg,rgba(0,0,0,0) 36.782deg,rgba(0,0,0,0.11) 36.812deg,rgba(0,0,0,0.11) 36.872deg,rgba(0,0,0,0) 36.902deg,rgba(0,0,0,0) 37.102deg,rgba(0,0,0,0.13) 37.132deg,rgba(0,0,0,0.13) 37.122deg,rgba(0,0,0,0) 37.152deg,rgba(0,0,0,0) 37.282deg,rgba(0,0,0,0.17) 37.312deg,rgba(0,0,0,0.17) 37.372deg,rgba(0,0,0,0) 37.402deg,rgba(0,0,0,0) 37.462deg,rgba(0,0,0,0.10) 37.492deg,rgba(0,0,0,0.10) 37.582deg,rgba(0,0,0,0) 37.612deg,rgba(0,0,0,0) 37.702deg,rgba(0,0,0,0.04) 37.732deg,rgba(0,0,0,0.04) 37.752deg,rgba(0,0,0,0) 37.782deg,rgba(0,0,0,0) 37.912deg,rgba(0,0,0,0.13) 37.942deg,rgba(0,0,0,0.13) 38.002deg,rgba(0,0,0,0) 38.032deg,rgba(0,0,0,0) 38.122deg,rgba(0,0,0,0.07) 38.152deg,rgba(0,0,0,0.07) 38.192deg,rgba(0,0,0,0) 38.222deg,rgba(0,0,0,0) 38.312deg,rgba(0,0,0,0.21) 38.342deg,rgba(0,0,0,0.21) 38.352deg,rgba(0,0,0,0) 38.382deg,rgba(0,0,0,0) 38.422deg,rgba(0,0,0,0.15) 38.452deg,rgba(0,0,0,0.15) 38.582deg,rgba(0,0,0,0) 38.612deg,rgba(0,0,0,0) 38.672deg,rgba(110,165,235,0.15) 38.702deg,rgba(110,165,235,0.15) 38.792deg,rgba(0,0,0,0) 38.822deg,rgba(0,0,0,0) 38.842deg,rgba(0,0,0,0.14) 38.872deg,rgba(0,0,0,0.14) 38.932deg,rgba(0,0,0,0) 38.962deg,rgba(0,0,0,0) 39.092deg,rgba(0,0,0,0.20) 39.122deg,rgba(0,0,0,0.20) 39.252deg,rgba(0,0,0,0) 39.282deg,rgba(0,0,0,0) 39.412deg,rgba(0,0,0,0.08) 39.442deg,rgba(0,0,0,0.08) 39.432deg,rgba(0,0,0,0) 39.462deg,rgba(0,0,0,0) 39.482deg,rgba(0,0,0,0.15) 39.512deg,rgba(0,0,0,0.15) 39.502deg,rgba(0,0,0,0) 39.532deg,rgba(0,0,0,0) 39.622deg,rgba(0,0,0,0.15) 39.652deg,rgba(0,0,0,0.15) 39.672deg,rgba(0,0,0,0) 39.702deg,rgba(0,0,0,0) 39.792deg,rgba(0,0,0,0.04) 39.822deg,rgba(0,0,0,0.04) 39.832deg,rgba(0,0,0,0) 39.862deg,rgba(0,0,0,0) 40.062deg,rgba(0,0,0,0.03) 40.092deg,rgba(0,0,0,0.03) 40.222deg,rgba(0,0,0,0) 40.252deg,rgba(0,0,0,0) 40.452deg,rgba(0,0,0,0.15) 40.482deg,rgba(0,0,0,0.15) 40.612deg,rgba(0,0,0,0) 40.642deg,rgba(0,0,0,0) 40.662deg,rgba(0,0,0,0.04) 40.692deg,rgba(0,0,0,0.04) 40.732deg,rgba(0,0,0,0) 40.762deg,rgba(0,0,0,0) 40.962deg,rgba(0,0,0,0.08) 40.992deg,rgba(0,0,0,0.08) 41.032deg,rgba(0,0,0,0) 41.062deg,rgba(0,0,0,0) 41.152deg,rgba(0,0,0,0.21) 41.182deg,rgba(0,0,0,0.21) 41.222deg,rgba(0,0,0,0) 41.252deg,rgba(0,0,0,0) 41.272deg,rgba(0,0,0,0.20) 41.302deg,rgba(0,0,0,0.20) 41.292deg,rgba(0,0,0,0) 41.322deg,rgba(0,0,0,0) 41.362deg,rgba(0,0,0,0.09) 41.392deg,rgba(0,0,0,0.09) 41.402deg,rgba(0,0,0,0) 41.432deg,rgba(0,0,0,0) 41.492deg,rgba(0,0,0,0.19) 41.522deg,rgba(0,0,0,0.19) 41.542deg,rgba(0,0,0,0) 41.572deg,rgba(0,0,0,0) 41.772deg,rgba(0,0,0,0.13) 41.802deg,rgba(0,0,0,0.13) 41.932deg,rgba(0,0,0,0) 41.962deg,rgba(0,0,0,0) 41.982deg,rgba(110,165,235,0.07) 42.012deg,rgba(110,165,235,0.07) 42.102deg,rgba(0,0,0,0) 42.132deg)"></div>
<div class="abs" style="left:321px;top:22px;width:20px;height:700px;transform-origin:50% 0;transform:rotate(23deg);background:linear-gradient(to bottom,rgba(40,95,170,0.30),rgba(40,95,170,0) 60%);filter:blur(3px)"></div>
<div class="abs" style="left:360px;top:14px;width:22px;height:700px;transform-origin:50% 0;transform:rotate(23deg);background:linear-gradient(to bottom,rgba(40,95,170,0.28),rgba(40,95,170,0) 60%);filter:blur(3px)"></div>
<div class="abs" style="left:455px;top:35px;width:24px;height:700px;transform-origin:50% 0;transform:rotate(23deg);background:linear-gradient(to bottom,rgba(40,95,170,0.34),rgba(40,95,170,0) 60%);filter:blur(3px)"></div>
<div class="abs" style="left:417px;top:0px;width:26px;height:700px;transform-origin:50% 0;transform:rotate(23deg);background:linear-gradient(to bottom,rgba(40,95,170,0.20),rgba(40,95,170,0) 60%);filter:blur(3px)"></div>
<div class="abs" style="left:493px;top:0px;width:24px;height:700px;transform-origin:50% 0;transform:rotate(23deg);background:linear-gradient(to bottom,rgba(40,95,170,0.20),rgba(40,95,170,0) 60%);filter:blur(3px)"></div>
<div class="abs" style="left:525px;top:15px;width:70px;height:700px;transform-origin:50% 0;transform:rotate(23deg);background:linear-gradient(to bottom,rgba(40,95,170,0.30),rgba(40,95,170,0) 60%);filter:blur(3px)"></div>
<div class="abs" style="left:650px;top:20px;width:80px;height:700px;transform-origin:50% 0;transform:rotate(23deg);background:linear-gradient(to bottom,rgba(40,95,170,0.28),rgba(40,95,170,0) 60%);filter:blur(3px)"></div>
<div class="abs" style="left:788px;top:20px;width:44px;height:700px;transform-origin:50% 0;transform:rotate(23deg);background:linear-gradient(to bottom,rgba(40,95,170,0.22),rgba(40,95,170,0) 60%);filter:blur(3px)"></div>
<div class="bk" style="left:321.2px;top:12.2px;width:19.6px;height:19.6px;background:radial-gradient(circle closest-side,rgba(62,128,214,0.59) 0,rgba(60,125,210,0.59) 86%,rgba(60,125,210,0) 100%)"></div>
<div class="bk" style="left:359.9px;top:2.9px;width:22.2px;height:22.2px;background:radial-gradient(circle closest-side,rgba(62,128,214,0.92) 0,rgba(60,125,210,0.92) 86%,rgba(60,125,210,0) 100%)"></div>
<div class="bk" style="left:455.7px;top:23.7px;width:22.6px;height:22.6px;background:radial-gradient(circle closest-side,rgba(62,128,214,1.00) 0,rgba(60,125,210,1.00) 86%,rgba(60,125,210,0) 100%)"></div>
<div class="bk" style="left:522.2px;top:-8.8px;width:23.6px;height:23.6px;background:radial-gradient(circle closest-side,rgba(62,128,214,0.86) 0,rgba(60,125,210,0.86) 86%,rgba(60,125,210,0) 100%)"></div>
<div class="bk" style="left:543.2px;top:-7.8px;width:23.6px;height:23.6px;background:radial-gradient(circle closest-side,rgba(62,128,214,0.86) 0,rgba(60,125,210,0.86) 86%,rgba(60,125,210,0) 100%)"></div>
<div class="bk" style="left:554.7px;top:4.7px;width:24.6px;height:24.6px;background:radial-gradient(circle closest-side,rgba(62,128,214,0.86) 0,rgba(60,125,210,0.86) 86%,rgba(60,125,210,0) 100%)"></div>
<div class="bk" style="left:582.2px;top:-4.8px;width:25.6px;height:25.6px;background:radial-gradient(circle closest-side,rgba(62,128,214,0.81) 0,rgba(60,125,210,0.81) 86%,rgba(60,125,210,0) 100%)"></div>
<div class="bk" style="left:540.7px;top:21.7px;width:20.6px;height:20.6px;background:radial-gradient(circle closest-side,rgba(62,128,214,0.54) 0,rgba(60,125,210,0.54) 86%,rgba(60,125,210,0) 100%)"></div>
<div class="bk" style="left:572.2px;top:12.2px;width:25.6px;height:25.6px;background:radial-gradient(circle closest-side,rgba(62,128,214,0.54) 0,rgba(60,125,210,0.54) 86%,rgba(60,125,210,0) 100%)"></div>
<div class="bk" style="left:479.2px;top:-11.8px;width:17.6px;height:17.6px;background:radial-gradient(circle closest-side,rgba(62,128,214,0.76) 0,rgba(60,125,210,0.76) 86%,rgba(60,125,210,0) 100%)"></div>
<div class="bk" style="left:474.2px;top:49.2px;width:17.6px;height:17.6px;background:radial-gradient(circle closest-side,rgba(62,128,214,0.86) 0,rgba(60,125,210,0.86) 86%,rgba(60,125,210,0) 100%)"></div>
<div class="bk" style="left:629.2px;top:8.2px;width:25.6px;height:25.6px;background:radial-gradient(circle closest-side,rgba(62,128,214,0.76) 0,rgba(60,125,210,0.76) 86%,rgba(60,125,210,0) 100%)"></div>
<div class="bk" style="left:626.2px;top:19.2px;width:25.6px;height:25.6px;background:radial-gradient(circle closest-side,rgba(62,128,214,0.81) 0,rgba(60,125,210,0.81) 86%,rgba(60,125,210,0) 100%)"></div>
<div class="bk" style="left:653.2px;top:19.2px;width:25.6px;height:25.6px;background:radial-gradient(circle closest-side,rgba(62,128,214,0.86) 0,rgba(60,125,210,0.86) 86%,rgba(60,125,210,0) 100%)"></div>
<div class="bk" style="left:666.2px;top:1.2px;width:27.6px;height:27.6px;background:radial-gradient(circle closest-side,rgba(62,128,214,0.76) 0,rgba(60,125,210,0.76) 86%,rgba(60,125,210,0) 100%)"></div>
<div class="bk" style="left:676.2px;top:6.2px;width:27.6px;height:27.6px;background:radial-gradient(circle closest-side,rgba(62,128,214,0.59) 0,rgba(60,125,210,0.59) 86%,rgba(60,125,210,0) 100%)"></div>
<div class="bk" style="left:684.2px;top:-5.8px;width:27.6px;height:27.6px;background:radial-gradient(circle closest-side,rgba(62,128,214,0.65) 0,rgba(60,125,210,0.65) 86%,rgba(60,125,210,0) 100%)"></div>
<div class="bk" style="left:702.2px;top:15.2px;width:25.6px;height:25.6px;background:radial-gradient(circle closest-side,rgba(62,128,214,0.86) 0,rgba(60,125,210,0.86) 86%,rgba(60,125,210,0) 100%)"></div>
<div class="bk" style="left:715.2px;top:13.2px;width:23.6px;height:23.6px;background:radial-gradient(circle closest-side,rgba(62,128,214,0.65) 0,rgba(60,125,210,0.65) 86%,rgba(60,125,210,0) 100%)"></div>
<div class="bk" style="left:731.7px;top:4.7px;width:26.6px;height:26.6px;background:radial-gradient(circle closest-side,rgba(62,128,214,0.81) 0,rgba(60,125,210,0.81) 86%,rgba(60,125,210,0) 100%)"></div>
<div class="bk" style="left:788.7px;top:9.2px;width:26.6px;height:26.6px;background:radial-gradient(circle closest-side,rgba(62,128,214,0.86) 0,rgba(60,125,210,0.86) 86%,rgba(60,125,210,0) 100%)"></div>
<div class="bk" style="left:808.2px;top:-3.8px;width:29.6px;height:29.6px;background:radial-gradient(circle closest-side,rgba(62,128,214,0.81) 0,rgba(60,125,210,0.81) 86%,rgba(60,125,210,0) 100%)"></div>
<div class="bk" style="left:599.2px;top:29.2px;width:21.6px;height:21.6px;background:radial-gradient(circle closest-side,rgba(62,128,214,0.54) 0,rgba(60,125,210,0.54) 86%,rgba(60,125,210,0) 100%)"></div>
<div class="bk" style="left:106.0px;top:385.0px;width:14.0px;height:14.0px;background:radial-gradient(circle closest-side,rgba(70,130,210,0.30) 0,rgba(70,130,210,0.30) 55%,rgba(70,130,210,0) 100%)"></div>
<div class="bk" style="left:111.0px;top:430.0px;width:16.0px;height:16.0px;background:radial-gradient(circle closest-side,rgba(70,130,210,0.29) 0,rgba(70,130,210,0.29) 55%,rgba(70,130,210,0) 100%)"></div>
<div class="bk" style="left:78.0px;top:476.0px;width:22.0px;height:22.0px;background:radial-gradient(circle closest-side,rgba(70,130,210,0.30) 0,rgba(70,130,210,0.30) 55%,rgba(70,130,210,0) 100%)"></div>
<div class="bk" style="left:56.0px;top:495.0px;width:18.0px;height:18.0px;background:radial-gradient(circle closest-side,rgba(70,130,210,0.29) 0,rgba(70,130,210,0.29) 55%,rgba(70,130,210,0) 100%)"></div>
<div class="bk" style="left:1.0px;top:536.0px;width:20.0px;height:20.0px;background:radial-gradient(circle closest-side,rgba(70,130,210,0.29) 0,rgba(70,130,210,0.29) 55%,rgba(70,130,210,0) 100%)"></div>
<div class="bk" style="left:64.0px;top:546.0px;width:16.0px;height:16.0px;background:radial-gradient(circle closest-side,rgba(70,130,210,0.22) 0,rgba(70,130,210,0.22) 55%,rgba(70,130,210,0) 100%)"></div>
<div class="bk" style="left:53.0px;top:564.0px;width:20.0px;height:20.0px;background:radial-gradient(circle closest-side,rgba(70,130,210,0.24) 0,rgba(70,130,210,0.24) 55%,rgba(70,130,210,0) 100%)"></div>
<div class="bk" style="left:107.0px;top:518.0px;width:20.0px;height:20.0px;background:radial-gradient(circle closest-side,rgba(70,130,210,0.17) 0,rgba(70,130,210,0.17) 55%,rgba(70,130,210,0) 100%)"></div>
<div class="bk" style="left:10.0px;top:604.0px;width:18.0px;height:18.0px;background:radial-gradient(circle closest-side,rgba(70,130,210,0.22) 0,rgba(70,130,210,0.22) 55%,rgba(70,130,210,0) 100%)"></div>
<div class="bk" style="left:9.0px;top:630.0px;width:22.0px;height:22.0px;background:radial-gradient(circle closest-side,rgba(70,130,210,0.17) 0,rgba(70,130,210,0.17) 55%,rgba(70,130,210,0) 100%)"></div>
<div class="bk" style="left:111.0px;top:652.0px;width:16.0px;height:16.0px;background:radial-gradient(circle closest-side,rgba(70,130,210,0.15) 0,rgba(70,130,210,0.15) 55%,rgba(70,130,210,0) 100%)"></div>
<div class="bk" style="left:19.0px;top:497.0px;width:16.0px;height:16.0px;background:radial-gradient(circle closest-side,rgba(70,130,210,0.11) 0,rgba(70,130,210,0.11) 55%,rgba(70,130,210,0) 100%)"></div>
<div class="bk" style="left:100.0px;top:344.0px;width:16.0px;height:16.0px;background:radial-gradient(circle closest-side,rgba(70,130,210,0.15) 0,rgba(70,130,210,0.15) 55%,rgba(70,130,210,0) 100%)"></div>
<div class="bk" style="left:95.0px;top:1005.0px;width:10.0px;height:10.0px;background:radial-gradient(circle closest-side,rgba(70,130,210,0.19) 0,rgba(70,130,210,0.19) 55%,rgba(70,130,210,0) 100%)"></div>
<div class="bk" style="left:80.0px;top:1063.0px;width:10.0px;height:10.0px;background:radial-gradient(circle closest-side,rgba(70,130,210,0.15) 0,rgba(70,130,210,0.15) 55%,rgba(70,130,210,0) 100%)"></div>
<div class="bk" style="left:175.0px;top:900.0px;width:10.0px;height:10.0px;background:radial-gradient(circle closest-side,rgba(70,130,210,0.22) 0,rgba(70,130,210,0.22) 55%,rgba(70,130,210,0) 100%)"></div>
<div class="bk" style="left:95.0px;top:947.0px;width:10.0px;height:10.0px;background:radial-gradient(circle closest-side,rgba(70,130,210,0.19) 0,rgba(70,130,210,0.19) 55%,rgba(70,130,210,0) 100%)"></div>
<div class="fade"></div>
<div id="fedoralogo">fedora</div>
</div>

<div id="panel"></div>
<div id="topbar">
<span style="left:12px">活动</span>
<svg class="abs" style="left:62px;top:4px" width="17" height="17" viewBox="0 0 17 17"><rect x="1" y="1.800" width="14.600" height="13.600" rx="2" fill="none" stroke="#fff" stroke-width="1.600"/><path d="M4.300 6.300l2.700 2.300-2.700 2.300" fill="none" stroke="#fff" stroke-width="1.200"/><path d="M8 11.500h3.400" stroke="#fff" stroke-width="1.200"/></svg>
<span style="left:84px">终端</span>
<div class="abs" style="left:119px;top:11px;width:0;height:0;border:5px solid transparent;border-top:5px solid #fff;border-bottom:0"></div>
<span style="left:911px">星期六</span><span style="left:959px;letter-spacing:.5px">21</span><span style="left:976.5px;font-family:'Noto Sans CJK JP',sans-serif">：</span><span style="left:992px;letter-spacing:.5px">20</span>
<svg class="abs" style="left:1812px;top:5px" width="18" height="17" viewBox="0 0 18 17"><path d="M2.200 5.600a9.600 9.600 0 0 1 13.600 0" fill="none" stroke="#6b6b6b" stroke-width="2.100"/><path d="M4.400 8.300a6.500 6.500 0 0 1 9.200 0" fill="none" stroke="#fff" stroke-width="2"/><path d="M6.500 10.800a3.600 3.600 0 0 1 5 0" fill="none" stroke="#fff" stroke-width="1.900"/><circle cx="9" cy="13.300" r="1.900" fill="#fff"/></svg>
<svg class="abs" style="left:1840px;top:5px" width="18" height="17" viewBox="0 0 18 17"><path d="M1 5.300h3L7.300 1.600v12.800L4 10.700H1z" fill="#fff"/><path d="M8.800 5.800a3.500 3.500 0 0 1 0 4.400" fill="none" stroke="#fff" stroke-width="1.300"/><path d="M10.500 3.800a6 6 0 0 1 0 8.400" fill="none" stroke="#fff" stroke-width="1.400"/><path d="M12.600 1.600a9 9 0 0 1 0 12.800" fill="none" stroke="#6b6b6b" stroke-width="1.700"/></svg>
<svg class="abs" style="left:1870px;top:4px" width="15" height="18" viewBox="0 0 15 18"><path d="M1.800 3.500h2.400V1.600h6.600v1.900h2.400v13H1.800z" fill="none" stroke="#fff" stroke-width="1.600"/><rect x="4.500" y="9" width="6" height="2" fill="#fff"/><rect x="4.500" y="12.300" width="6" height="2" fill="#fff"/></svg>
<div class="abs" style="left:1895px;top:11px;width:0;height:0;border:5px solid transparent;border-top:5px solid #fff;border-bottom:0"></div>
</div>

<div id="ff">
<div class="title"></div>
<div class="tabs"></div>
<div class="nav"></div>
<div class="pg">
<!-- tab strip -->
<div class="abs" style="left:126px;top:95px;width:225px;height:34px;border:1px solid #b1b1b0;border-left:0;background:#e7e7e6"></div>
<div class="abs" style="left:351px;top:96px;width:700px;height:33px;background:#e9e9e8"></div><div class="abs" style="left:351px;top:97px;width:700px;height:2px;background:#3d8fe4"></div>
<svg class="abs" style="left:135px;top:105px" width="16" height="16" viewBox="0 0 16 16"><rect width="16" height="16" fill="#fff"/><g fill="#1468f8"><ellipse cx="3" cy="6.600" rx="1.700" ry="2.200" transform="rotate(-12 3 6.600)"/><ellipse cx="6.400" cy="3.400" rx="1.500" ry="2.300"/><ellipse cx="10.400" cy="3.700" rx="1.500" ry="2.200"/><ellipse cx="12.800" cy="7.300" rx="1.600" ry="2.100" transform="rotate(12 12.800 7.300)"/><path fill="#c4d9ff" stroke="#1468f8" stroke-width="1.600" transform="translate(7.800 11.200) scale(.89) translate(-7.800 -11.600)" d="M7.800 7.500C6.200 6.800 5.600 8.300 4.300 9.600 2.800 11 1.900 12.200 2.500 13.700c.6 1.600 2.400 1.800 3.600 1.500.8-.2 1.200-.3 1.700-.3s.9.100 1.700.3c1.200.3 3 .1 3.600-1.500.6-1.500-.3-2.700-1.800-4.100C10 8.300 9.400 7.500 7.800 7.500z"/></g><text x="7.800" y="13.500" font-size="4.600" font-family="Liberation Sans,sans-serif" font-weight="bold" fill="#1468f8" text-anchor="middle">du</text></svg>
<div class="abs tabt" style="left:157px;top:101px;width:168px">fedora 安装gnome_百度搜索</div>
<div class="abs" style="left:285px;top:98px;width:42px;height:29px;background:linear-gradient(to right,rgba(231,231,230,0),#e7e7e6 88%)"></div>
<svg class="abs" style="left:327px;top:107px" width="12" height="12" viewBox="0 0 12 12"><path d="M1.5 1.5l9 9M10.500 1.500l-9 9" stroke="#3b3b3f" stroke-width="1.6" fill="none"/></svg>
<svg class="abs" style="left:360px;top:105px" width="16" height="16" viewBox="0 0 16 16"><path fill="#111" fill-rule="evenodd" d="M8 0C3.580 0 0 3.580 0 8c0 3.540 2.290 6.530 5.470 7.590.400.070.550-.170.550-.380 0-.190-.010-.820-.010-1.490-2.010.370-2.530-.490-2.690-.940-.090-.230-.480-.940-.820-1.130-.280-.150-.680-.520-.010-.530.630-.010 1.080.580 1.230.820.720 1.210 1.870.870 2.330.660.070-.520.280-.870.510-1.070-1.780-.200-3.640-.890-3.640-3.950 0-.870.310-1.590.820-2.150-.080-.200-.360-1.020.080-2.120 0 0 .670-.210 2.200.820.640-.180 1.320-.270 2-.270.680 0 1.360.090 2 .270 1.530-1.040 2.200-.820 2.200-.820.440 1.100.160 1.920.080 2.120.510.560.820 1.270.820 2.150 0 3.070-1.870 3.750-3.650 3.950.290.250.540.730.540 1.480 0 1.070-.010 1.930-.010 2.200 0 .210.150.460.550.380A8.013 8.013 0 0 0 16 8c0-4.420-3.580-8-8-8z"/></svg>
<div class="abs tabt" style="left:382px;top:101px;width:300px">diary/Install_Fedora.md at master</div>
<!-- nav -->
<div class="abs" style="left:129px;top:132px;width:34px;height:34px;border-radius:50%;background:#f9f9f9;border:1px solid #b3b3b3"></div>
<svg class="abs" style="left:138px;top:141px" width="16" height="16" viewBox="0 0 16 16"><path d="M15.600 8H2M7.600 2.100L1.700 8l5.900 5.900" stroke="#3d3f42" stroke-width="1.950" fill="none" stroke-linecap="round" stroke-linejoin="round"/></svg>
<svg class="abs" style="left:171px;top:141px" width="16" height="16" viewBox="0 0 16 16"><path d="M.5 8h13.600M8.500 2.100L14.400 8l-5.900 5.900" stroke="#a6a6a6" stroke-width="1.9" fill="none" stroke-linecap="round" stroke-linejoin="round"/></svg>
<svg class="abs" style="left:203px;top:141px" width="17" height="16" viewBox="0 0 17 16"><path d="M12.190 11.410A5.600 5.600 0 1 1 11.200 3.910" stroke="#3d3f42" stroke-width="1.950" fill="none" stroke-linecap="round"/><path d="M15.400 1.300V6.350H10.400" stroke="#3d3f42" stroke-width="2" fill="none" stroke-linecap="round" stroke-linejoin="miter"/><path d="M15.400 6.350H12.300L15.400 3.300z" fill="#3d3f42"/></svg>
<svg class="abs" style="left:235px;top:141px" width="17" height="17" viewBox="0 0 17 17"><path d="M1.300 8.500L8.050 1.600l6.750 6.900" stroke="#3d3f42" stroke-width="1.950" fill="none" stroke-linecap="round" stroke-linejoin="round"/><path d="M3.300 8.200v6.250h9.500V8.200" stroke="#3d3f42" stroke-width="1.950" fill="none" stroke-linejoin="round"/><path d="M6.700 14V9.300h2.700V14z" fill="#3d3f42"/><rect x="7.700" y="11.300" width=".8" height=".9" fill="#e9e9e8"/></svg>
<div class="abs" style="left:372px;top:134px;width:520px;height:30px;background:#fff;border:1px solid #c2c2c1;border-radius:4px"></div>
<svg class="abs" style="left:381px;top:141px" width="16" height="16" viewBox="0 0 16 16"><circle cx="8" cy="8" r="6.500" stroke="#3f3f44" stroke-width="1" fill="none"/><rect x="7.300" y="7" width="1.400" height="4.400" fill="#3f3f44"/><circle cx="8" cy="4.900" r=".95" fill="#3f3f44"/></svg>
<svg class="abs" style="left:403px;top:141px" width="13" height="16" viewBox="0 0 13 16"><path d="M3.200 7V4.800a3.300 3.300 0 0 1 6.600 0V7" stroke="#12bc00" stroke-width="1.900" fill="none"/><rect x=".6" y="6.600" width="11.800" height="8.400" rx="1" fill="#12bc00"/></svg>
<div class="abs" style="left:421px;top:137px;font:15.500px/24px 'Liberation Sans',sans-serif;color:#12a10a;white-space:nowrap;letter-spacing:-.5px">GitHub, Inc. (US)</div>

<!-- github page -->
<div class="abs" style="left:270px;top:190px;width:119px;height:28px;border:1px solid #cdd0d3;border-radius:3px;background:linear-gradient(#fafbfc,#eff3f6)"></div>
<div class="abs" style="left:281px;top:193px;font:12px/20px 'Liberation Sans',sans-serif;color:#586069;white-space:nowrap">Branch: <b style="color:#24292e">master</b></div>
<div class="abs" style="left:370px;top:201px;width:0;height:0;border:4px solid transparent;border-top-color:#24292e;border-bottom:0"></div>
<div class="abs" style="left:400px;top:189px;font:bold 16px/26px 'Liberation Sans',sans-serif;word-spacing:-.6px;color:#24292e;white-space:nowrap"><span style="color:#0366d6">diary</span> <span style="font-weight:normal;color:#586069">/</span> Install_Fedora.md</div>

<div class="abs" style="left:270px;top:228px;width:780px;height:73px;border:1px solid #c8e1ff;border-radius:3px;background:#fff"></div>
<div class="abs" style="left:271px;top:229px;width:778px;height:41px;background:#f1f8ff;border-bottom:1px solid #c8e1ff"></div>
<svg class="abs" style="left:281px;top:238px;border-radius:3px" width="20" height="20" viewBox="0 0 20 20"><defs><filter id="avb"><feGaussianBlur stdDeviation=".7"/></filter><clipPath id="avc"><rect width="20" height="20" rx="3"/></clipPath></defs><g clip-path="url(#avc)"><rect width="20" height="20" fill="#e9f5e4"/><g filter="url(#avb)"><rect x="-1" y="-1" width="22" height="3.500" fill="#a6d688"/><path d="M0 8l7-3v3L0 10z" fill="#a9d49a"/><path d="M0 15l4-3 4 2 2 7H0z" fill="#6f9c7c"/><rect x="8.300" y="7.500" width="4.200" height="11.500" rx="1.500" fill="#5a9fd2"/><rect x="14" y="11.500" width="4" height="6" rx="1.500" fill="#64a8d6"/><circle cx="9" cy="3.800" r="1.900" fill="#6d6a55"/><rect x="8.600" y="4.500" width="2.600" height="3.200" fill="#e8cdbd"/><circle cx="18" cy="7.500" r="1.600" fill="#35566a"/><circle cx="17.500" cy="2.500" r="1.500" fill="#7fa46f"/><rect x="15" y="16.500" width="5" height="3" fill="#7b9a86"/><rect x="12.500" y="18" width="2.500" height="2" fill="#e8a25c"/><rect x="8" y="18.300" width="3" height="2" fill="#c07a6a"/></g></g></svg>
<div class="abs" style="left:305px;top:238px;font:13px/20px 'Liberation Sans',sans-serif;color:#586069;white-space:nowrap"><b style="color:#24292e">ourfor</b> Update Install_Fedora.md</div>
<div class="abs" style="left:281px;top:274px;font:13px/20px 'Liberation Sans',sans-serif;color:#0366d6;white-space:nowrap"><b>1</b> contributor</div>

<div class="abs" style="left:270px;top:316px;width:780px;height:555px;border:1px solid #dcdfe2;border-radius:3px;background:#fff"></div>
<div class="abs" style="left:271px;top:317px;width:778px;height:43px;background:#fafbfc;border-bottom:1px solid #e1e4e8"></div>
<div class="abs" style="left:281px;top:327px;font:12px/20px 'DejaVu Sans Mono',monospace;color:#24292e;white-space:pre;letter-spacing:-.23px">20 lines (17 sloc)</div>
<div class="abs" style="left:417px;top:329px;width:1px;height:18px;background:#dfe2e5"></div>
<div class="abs" style="left:428px;top:327px;font:12px/20px 'DejaVu Sans Mono',monospace;color:#24292e;white-space:pre;letter-spacing:-.23px">391 Bytes</div>

<div class="abs" style="left:316px;top:401px;font:bold 32px/40px 'Liberation Sans',sans-serif;letter-spacing:.38px;color:#24292e;white-space:nowrap">install software</div>
<div class="abs" style="left:316px;top:454px;width:700px;height:1px;background:#eaecef"></div>

<div class="abs cb" style="top:471px;height:51px"></div>
<div class="abs cd" style="top:487px">sudo dnf install vim git gcc -y</div>
<div class="abs cb" style="top:539px;height:91px"></div>
<div class="abs cd" style="top:555px">sudo dnf remove papirus-icon-theme
sudo dnf copr <span class="k">enable</span> dirkdavidis/papirus-icon-theme
sudo dnf update<span class="o">&amp;&amp;</span>sudo dnf install papirus-icon-theme</div>
<div class="abs cb" style="top:646px;height:71px"></div>
<div class="abs cd" style="top:662px">sudo dnf copr <span class="k">enable</span> tcg/themes
sudo dnf install materia-theme</div>
<div class="abs" style="left:335px;top:742px;width:5px;height:5px;border-radius:50%;background:#24292e"></div>
<div class="abs" style="left:348px;top:732px;font:16px/24px 'Liberation Sans',sans-serif;color:#24292e;white-space:nowrap">install gnome-tweak</div>
<div class="abs cb" style="top:773px;height:52px"></div>
<div class="abs cd" style="top:790px">sudo yum -y install gnome-tweak-tool</div>

<div class="abs" style="left:270px;top:927px;width:780px;height:1px;background:#e7e9ec"></div>
<div class="abs" style="left:270px;top:966px;font:12px/20px 'Liberation Sans',sans-serif;color:#586069;white-space:nowrap">© 2018 GitHub, Inc.</div>
<div class="abs" style="left:392px;top:966px;font:12px/20px 'Liberation Sans',sans-serif;color:#0366d6;white-space:nowrap">Terms</div>
<div class="abs" style="left:441px;top:966px;font:12px/20px 'Liberation Sans',sans-serif;color:#0366d6;white-space:nowrap">Privacy</div>
<div class="abs" style="left:497px;top:966px;font:12px/20px 'Liberation Sans',sans-serif;color:#0366d6;white-space:nowrap">Security</div>
</div>

</div>

<div id="term">
<div class="hb"><div class="t">Terminal</div><svg class="abs" style="left:1322px;top:12px" width="12" height="12" viewBox="0 0 12 12"><path d="M1.900 1.900l8.200 8.200M10.100 1.900l-8.200 8.200" stroke="#eeeeec" stroke-width="2.100" fill="none"/></svg></div>
<div class="menu"><span style="left:9px">文件(F)</span><span style="left:72px">编辑(E)</span><span style="left:136px">查看(V)</span><span style="left:201px">搜索(S)</span><span style="left:266px">终端(T)</span><span style="left:330px">帮助(H)</span></div>
<div id="scr">
<div><i>错误：下载软件包出错</i></div>
<div>  Cannot download 00789019-papirus-icon-theme/papirus-icon-theme-20180816-1.noarch.rpm: All mirrors were tried</div>
<div>bash-4.4$ sudo dnf -y install papirus-icon-theme</div>
<div><i>同步仓库</i> 'dirkdavidis-papirus-icon-theme' <i>缓存失败，禁用。</i></div>
<div><i>上次元数据过期检查：</i>0:25:32 <i>前，执行于</i> 2018<i>年</i>10<i>月</i>06<i>日</i> <i>星期六</i> 20<i>时</i>47<i>分</i>23<i>秒。</i></div>
<div><i>未找到匹配的参数：</i> <b>papirus-icon-theme</b></div>
<div><i>错误：没有任何匹配</i></div>
<div>irus-icon-theme/master/install.sh | shusercontent.com/PapirusDevelopmentTeam/papi</div>
<div>&nbsp;</div>
<div>&nbsp;</div>
<div>&nbsp;</div>
<div>      ppppp                         ii</div>
<div>      pp   pp     aaaaa   ppppp          rr  rrr   uu   uu     sssss</div>
<div>      ppppp     aa   aa   pp   pp   ii   rrrr      uu   uu   ssss</div>
<div>      pp        aa   aa   pp   pp   ii   rr        uu   uu      ssss</div>
<div>      pp          aaaaa   ppppp     ii   rr          uuuuu   sssss</div>
<div>                          pp</div>
<div>                          pp</div>
<div>&nbsp;</div>
<div>&nbsp;</div>
<div>  Papirus icon theme</div>
<div>  https://github.com/PapirusDevelopmentTeam/papirus-icon-theme</div>
<div>&nbsp;</div>
<div>&nbsp;</div>
<div>=&gt; Getting the latest version from GitHub ...</div>
<div>--2018-10-06 21:13:35--  https://github.com/PapirusDevelopmentTeam/papirus-icon-theme/archive/master.tar.gz</div>
<div><i>正在解析主机</i> github.com (github.com)... 192.30.253.113, 192.30.253.112</div>
<div><i>正在连接</i> github.com (github.com)|192.30.253.113|:443... <i>已连接。</i></div>
<div><i>已发出</i> HTTP <i>请求，正在等待回应</i>... 302 Found</div>
<div><i>位置：</i>https://codeload.github.com/PapirusDevelopmentTeam/papirus-icon-theme/tar.gz/master [<i>跟随至新的</i> URL]</div>
<div>--2018-10-06 21:13:36--  https://codeload.github.com/PapirusDevelopmentTeam/papirus-icon-theme/tar.gz/master</div>
<div><i>正在解析主机</i> codeload.github.com (codeload.github.com)... 192.30.253.121, 192.30.253.120</div>
<div><i>正在连接</i> codeload.github.com (codeload.github.com)|192.30.253.121|:443... <i>已连接。</i></div>
<div><i>已发出</i> HTTP <i>请求，正在等待回应</i>... 200 OK</div>
<div><i>长度：未指定</i> [application/x-gzip]</div>
<div><i>正在保存至：</i>“/tmp/tmp.8vQP8WLEet”</div>
<div>&nbsp;</div>
<div>/tmp/tmp.8vQP8WLEet                      [                                    &lt;=&gt;                                ]  16.63M  42.1KB/s  <i>用时</i> 6m 26s</div>
<div>&nbsp;</div>
<div>2018-10-06 21:20:04 (44.2 KB/s) - “/tmp/tmp.8vQP8WLEet” <i>已保存</i> [17442334]</div>
<div>&nbsp;</div>
<div>=&gt; Unpacking archive ...</div>
<div>[sudo] sagit <i>的密码：</i></div>
<div>=&gt; Installing 'Papirus' ...</div>
<div>=&gt; Installing 'ePapirus' ...</div>
<div>=&gt; Installing 'Papirus-Dark' ...</div>
<div>=&gt; Installing 'Papirus-Light' ...</div>
<div>=&gt; Installing 'Papirus-Adapta' ...</div>
<div>=&gt; Installing 'Papirus-Adapta-Nokto' ...</div>
<div>=&gt; Clearing cache ...</div>
<div>=&gt; Done!</div>
<div>bash-4.4$ </div>
</div>
<div class="sb"><i></i></div>
</div>
</body>
</html>
